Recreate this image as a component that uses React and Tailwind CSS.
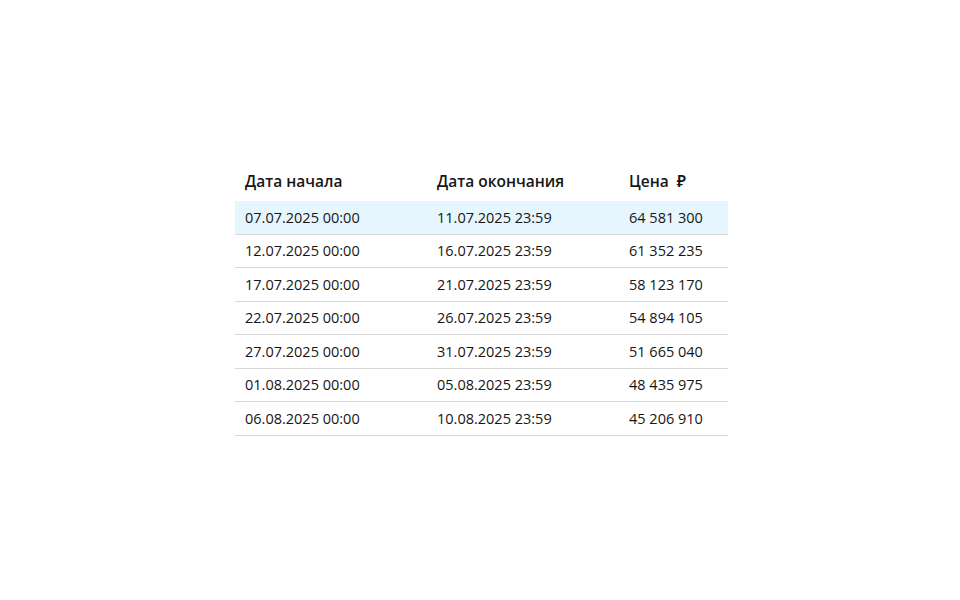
import React from 'react';

const rows = [
  ['07.07.2025 00:00', '11.07.2025 23:59', '64 581 300'],
  ['12.07.2025 00:00', '16.07.2025 23:59', '61 352 235'],
  ['17.07.2025 00:00', '21.07.2025 23:59', '58 123 170'],
  ['22.07.2025 00:00', '26.07.2025 23:59', '54 894 105'],
  ['27.07.2025 00:00', '31.07.2025 23:59', '51 665 040'],
  ['01.08.2025 00:00', '05.08.2025 23:59', '48 435 975'],
  ['06.08.2025 00:00', '10.08.2025 23:59', '45 206 910'],
];

const App = () => {
  return (
    <div
      className="w-[960px] h-[600px] bg-white pt-[160px] pl-[235px] text-[#161616]"
      style={{ fontFamily: '"Open Sans", "Noto Sans", sans-serif' }}
    >
      <div className="w-[493px] text-[14.5px]">
        <div className="flex h-[41px] items-center text-[15.5px] font-semibold pt-[3px]">
          <div className="w-[192px] pl-[10px]">Дата начала</div>
          <div className="w-[192px] pl-[10px]">Дата окончания</div>
          <div className="flex-1 pl-[10px]">Цена&nbsp;&nbsp;₽</div>
        </div>
        {rows.map((row, i) => (
          <div
            key={i}
            className={`flex h-[33.5px] items-center pt-[1px] border-b border-[#d9d9d9] ${
              i === 0 ? 'bg-[#e6f6fe]' : ''
            }`}
          >
            <div className="w-[192px] pl-[10px]">{row[0]}</div>
            <div className="w-[192px] pl-[10px]">{row[1]}</div>
            <div className="flex-1 pl-[10px]">{row[2]}</div>
          </div>
        ))}
      </div>
    </div>
  );
};

export default App;
